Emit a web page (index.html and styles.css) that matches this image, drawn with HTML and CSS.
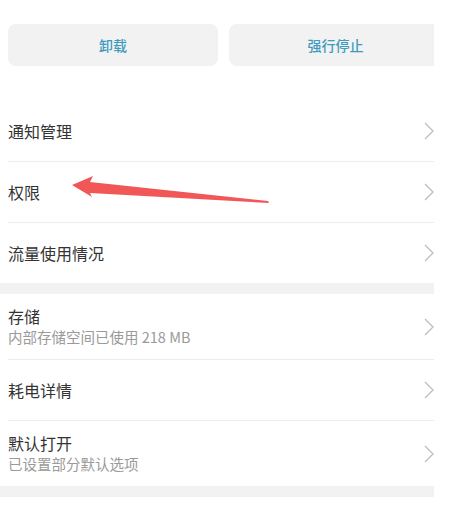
FILE: index.html
```html
<!DOCTYPE html>
<html lang="zh-CN">
<head>
<meta charset="utf-8">
<link rel="stylesheet" href="styles.css">
</head>
<body>
<div class="page">
  <div class="actions">
    <div class="btn btn-left">卸载</div>
    <div class="btn btn-right">强行停止</div>
  </div>

  <div class="group group-first">
    <div class="row"><div class="texts"><div class="title">通知管理</div></div><svg class="chev" viewBox="0 0 10 18"><polyline points="1,1 9,9 1,17"/></svg></div>
    <div class="row"><div class="texts"><div class="title">权限</div></div><svg class="chev" viewBox="0 0 10 18"><polyline points="1,1 9,9 1,17"/></svg></div>
    <div class="row row-last"><div class="texts"><div class="title">流量使用情况</div></div><svg class="chev" viewBox="0 0 10 18"><polyline points="1,1 9,9 1,17"/></svg></div>
  </div>

  <div class="band"></div>

  <div class="group">
    <div class="row row-tall"><div class="texts"><div class="title">存储</div><div class="sub">内部存储空间已使用 218 MB</div></div><svg class="chev" viewBox="0 0 10 18"><polyline points="1,1 9,9 1,17"/></svg></div>
    <div class="row"><div class="texts"><div class="title">耗电详情</div></div><svg class="chev" viewBox="0 0 10 18"><polyline points="1,1 9,9 1,17"/></svg></div>
    <div class="row row-tall row-last"><div class="texts"><div class="title">默认打开</div><div class="sub">已设置部分默认选项</div></div><svg class="chev" viewBox="0 0 10 18"><polyline points="1,1 9,9 1,17"/></svg></div>
  </div>

  <div class="band"></div>

  <svg class="arrow" viewBox="0 0 220 40" width="220" height="40">
    <polygon points="12,15 33,6 30,12 208,31 209,33 30,23 32,27"/>
  </svg>
</div>
</body>
</html>
```
FILE: styles.css
```css
html, body {
  margin: 0;
  padding: 0;
  background: #ffffff;
}
body {
  font-family: "Noto Sans CJK SC", "Noto Sans", sans-serif;
}
.page {
  position: relative;
  width: 434px;
  height: 518px;
  overflow: hidden;
}
.actions {
  display: flex;
  gap: 11px;
  padding: 24px 0 0 8px;
  height: 42px;
}
.btn {
  flex: none;
  background: #f2f2f2;
  border-radius: 8px;
  height: 42px;
  display: flex;
  align-items: center;
  justify-content: center;
  color: #3f9bbd;
  font-size: 14px;
  font-weight: 500;
}
.btn-left {
  width: 210px;
}
.btn-right {
  width: 213px;
  padding-right: 8px;
}
.group-first {
  margin-top: 35px;
}
.row {
  display: flex;
  align-items: center;
  justify-content: space-between;
  height: 60px;
  margin-left: 8px;
  border-bottom: 1px solid #ececec;
}
.row-tall {
  height: 65px;
}
.row-last {
  border-bottom: none;
}
.title {
  font-size: 16px;
  color: #333333;
  line-height: 20px;
}
.sub {
  font-size: 14.5px;
  color: #9a9a9a;
  line-height: 20px;
  margin-top: 1px;
}
.chev {
  width: 10px;
  height: 18px;
  flex: none;
}
.chev polyline {
  fill: none;
  stroke: #bdbdbd;
  stroke-width: 1.3;
}
.band {
  height: 11px;
  background: #f2f2f2;
}
.arrow {
  position: absolute;
  left: 60px;
  top: 170px;
}
.arrow polygon {
  fill: #f25757;
}
```
